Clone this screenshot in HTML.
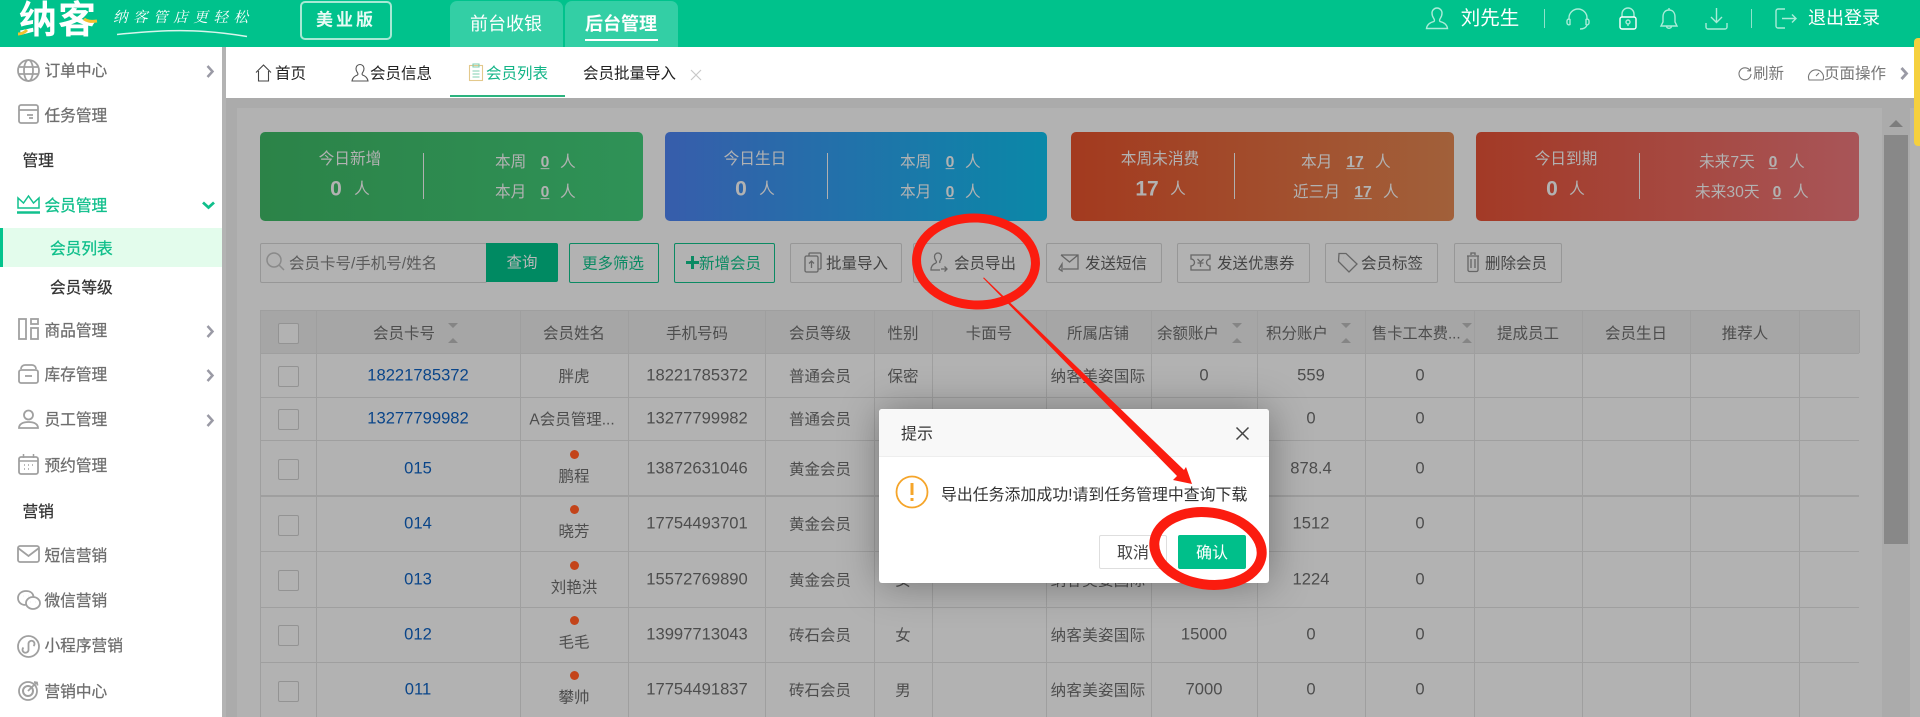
<!DOCTYPE html>
<html lang="zh-CN"><head><meta charset="utf-8"><title>会员列表</title>
<style>
html,body{margin:0;padding:0;width:1920px;height:717px;overflow:hidden;background:#fff}
body{position:relative;font-family:"Liberation Sans","Noto Sans CJK SC",sans-serif;font-size:15.5px;color:#555}
div,span,svg{position:absolute}
.c,.l{white-space:nowrap;line-height:1}
.c{transform:translate(-50%,-50%)}
.l{transform:translateY(-50%)}
svg{overflow:visible;fill:none}
.side{font-size:15.7px;color:#6e6e6e;-webkit-text-stroke:.25px #6e6e6e}
.side svg{stroke:#a0a0a0;stroke-width:1.8}
.hd svg{stroke:#a9ecd8;stroke-width:1.4}
.card{top:132px;height:89px;border-radius:5px}
.card .c,.card .l{color:#b2b2b2;font-size:15.7px}
.card .b{font-size:21px;font-weight:bold}
.card u{text-decoration:underline}
.dv{width:1px;top:21px;height:46px;background:#b0b0b0}
.btn{top:243px;height:38px;border:1px solid #979797;border-radius:2px;box-sizing:content-box}
.g{border-color:#0b8a63}
.tb svg{stroke:#666;stroke-width:1.3}
.vl{top:310px;width:1px;height:407px;background:#9f9f9f}
.hl{left:260px;width:1599px;height:1px;background:#9f9f9f}
.cb{left:278px;width:19px;height:19px;border:1px solid #939393;border-radius:2px;background:#b2b2b2}
.d{width:9px;height:9px;border-radius:50%;background:#c3441a;left:570px}
.a{color:#0a4589}
.tx{color:#4d4d4d}
.n{font-size:16.6px}
</style></head><body>

<!-- HEADER -->
<div class="hd" style="left:0;top:0;width:1920px;height:47px;background:#00c28c">
 <span class="c" style="left:58px;top:21px;font-size:38px;font-weight:bold;color:#fff;letter-spacing:1px">纳客</span>
 <svg style="left:0;top:0" width="110" height="47"><path d="M18 34c3 0 6-1 9-4" stroke="#f3c12f" stroke-width="3"/><path d="M84 19c3 2 6 3 13 2" stroke="#f3c12f" stroke-width="3"/></svg>
 <span class="l" style="left:113px;top:18px;font-family:'Liberation Serif','Noto Serif CJK SC',serif;font-size:14.5px;color:#fff;letter-spacing:5.6px;font-style:italic">纳客管店更轻松</span>
 <svg style="left:0;top:0" width="260" height="47"><path d="M117 34.500C140 32 175 29 205 31.500c15 1 30 3 42 5" stroke="#d8f5ec" stroke-width="1.500"/></svg>
 <div style="left:300px;top:1px;width:88px;height:35px;border:2px solid #a6e9d4;border-radius:5px"></div>
 <span class="c" style="left:346px;top:20px;font-size:17px;font-weight:bold;color:#e8fbf5;letter-spacing:3px">美业版</span>
 <div style="left:450px;top:1px;width:113px;height:46px;background:#33cfa5;border-radius:7px 7px 0 0"></div>
 <div style="left:565px;top:1px;width:113px;height:46px;background:#33cfa5;border-radius:7px 7px 0 0"></div>
 <span class="c" style="left:506px;top:24px;font-size:18px;color:#fff">前台收银</span>
 <span class="c" style="left:621px;top:24px;font-size:18px;font-weight:bold;color:#fff">后台管理</span>
 <div style="left:585px;top:39px;width:73px;height:2px;background:#fff"></div>

 <svg style="left:1426px;top:8px" width="22" height="22" viewBox="0 0 22 22"><path d="M8 13.500c-4 1-7 3-7.500 7h21c-.5-4-3.500-6-7.500-7-1-1-.5-2 .5-3.500 1-1.500 1.500-3 1.500-5a5 5 0 0 0-10 0c0 2 .5 3.500 1.500 5 1 1.500 1.500 2.500.5 3.500z"/></svg>
 <span class="c" style="left:1490px;top:19px;font-size:19.5px;color:#fff">刘先生</span>
 <div style="left:1544px;top:9px;width:1px;height:19px;background:#8fe3cb"></div>
 <svg style="left:1566px;top:8px" width="24" height="22" viewBox="0 0 24 22"><path d="M3 11V10a9 9 0 0 1 18 0v1M3 11a2 2 0 0 0-2 2v2a2 2 0 0 0 3 1.500V11.500A2 2 0 0 0 3 11zM21 11a2 2 0 0 1 2 2v2a2 2 0 0 1-3 1.500V11.500a2 2 0 0 1 1-.5zM21 17c-1 3-4 4-7 4"/></svg>
 <svg style="left:1619px;top:8px" width="18" height="22" viewBox="0 0 18 22"><path d="M3 9V6a6 6 0 0 1 12 0v3" /><rect x="1" y="9" width="16" height="12" rx="2" stroke="#fff"/><circle cx="9" cy="14" r="2"/><path d="M9 16v2"/></svg>
 <svg style="left:1660px;top:7px" width="18" height="24" viewBox="0 0 18 24"><path d="M9 3c-4 0-6 3-6 7v5l-2 4h16l-2-4v-5c0-4-2-7-6-7zM9 3V1M6.500 19c0 3 5 3 5 0"/></svg>
 <svg style="left:1705px;top:8px" width="23" height="22" viewBox="0 0 23 22"><path d="M11.500 0v14M6 9l5.500 5.500L17 9M1 15v4a2 2 0 0 0 2 2h17a2 2 0 0 0 2-2v-4"/></svg>
 <div style="left:1751px;top:9px;width:1px;height:19px;background:#8fe3cb"></div>
 <svg style="left:1775px;top:8px" width="22" height="21" viewBox="0 0 22 21"><path d="M10 1H3a2 2 0 0 0-2 2v15a2 2 0 0 0 2 2h7M7 10.500h14M17 6.500l4 4-4 4"/></svg>
 <span class="c" style="left:1844px;top:18px;font-size:18px;color:#fff">退出登录</span>
</div>

<!-- TABS -->
<div style="left:226px;top:47px;width:1694px;height:51px;background:#fff"></div>
<svg style="left:255px;top:64px;stroke:#444;stroke-width:1.100" width="17" height="18" viewBox="0 0 17 18"><path d="M1 8.500L8.500 1 16 8.500M3.500 7v10h10V7"/></svg>
<span class="l" style="left:275px;top:74px;color:#222">首页</span>
<svg style="left:351px;top:64px;stroke:#555;stroke-width:1.100" width="18" height="18" viewBox="0 0 18 18"><path d="M6.500 11c-3 1-5 3-5.500 6h16c-.5-3-2.500-5-5.500-6-1-1-.3-2 .5-3 .8-1.200 1-2.500 1-3.500a4 4 0 0 0-8 0c0 1 .2 2.300 1 3.500.8 1 1.500 2 .5 3z"/></svg>
<span class="l" style="left:370px;top:74px;color:#222">会员信息</span>
<svg style="left:468px;top:63px;stroke:#7fcfb2;stroke-width:1.100" width="16" height="18" viewBox="0 0 16 18"><rect x="1.500" y="2.500" width="13" height="15" stroke="#e3c98c"/><path d="M5 1h6v3H5zM4.500 8h7M4.500 11h7M4.500 14h7"/></svg>
<span class="l" style="left:486px;top:74px;color:#13b487">会员列表</span>
<div style="left:450px;top:95px;width:115px;height:2px;background:#2cb37f"></div>
<span class="l" style="left:583px;top:74px;color:#222">会员批量导入</span>
<svg style="left:690px;top:69px;stroke:#c9c9c9;stroke-width:1.200" width="12" height="12"><path d="M1 1l10 10M11 1L1 11"/></svg>
<svg style="left:1738px;top:67px;stroke:#777;stroke-width:1.100" width="14" height="14" viewBox="0 0 14 14"><path d="M12 3.500A6 6 0 1 0 13 7M12.500 .5v3.300H9.200"/></svg>
<span class="l" style="left:1753px;top:74px;color:#777">刷新</span>
<svg style="left:1808px;top:67px;stroke:#777;stroke-width:1.100" width="16" height="14" viewBox="0 0 16 14"><path d="M1 13a7.500 7.500 0 1 1 14 0zM8 9l3-3"/></svg>
<span class="l" style="left:1824px;top:74px;color:#777">页面操作</span>
<svg style="left:1900px;top:67px;stroke:#9a9aa5;stroke-width:2.800" width="9" height="13"><path d="M1.500 1l5 5.500-5 5.500"/></svg>

<!-- CONTENT BG -->
<div style="left:226px;top:98px;width:1694px;height:619px;background:#ababab"></div>
<div style="left:237px;top:108px;width:1683px;height:609px;background:#b2b2b2"></div>
<div style="left:1882px;top:108px;width:28px;height:609px;background:#ababab"></div>
<svg style="left:1889px;top:120px" width="14" height="7"><path d="M7 0l7 7H0z" fill="#7d7d7d"/></svg>
<div style="left:1884px;top:135px;width:24px;height:409px;background:#888"></div>

<!-- CARDS -->
<div class="card" style="left:260px;width:383px;background:linear-gradient(90deg,#2c8348,#2f9257)">
 <div class="dv" style="left:163px"></div>
 <span class="c" style="left:90px;top:28px">今日新增</span>
 <span class="c b" style="left:76px;top:57px">0</span><span class="c" style="left:102px;top:58px">人</span>
 <span class="l" style="left:235px;top:31px">本周</span><span class="c" style="left:285px;top:31px;font-weight:bold"><u>0</u></span><span class="l" style="left:300px;top:31px">人</span>
 <span class="l" style="left:235px;top:61px">本月</span><span class="c" style="left:285px;top:61px;font-weight:bold"><u>0</u></span><span class="l" style="left:300px;top:61px">人</span>
</div>
<div class="card" style="left:665px;width:382px;background:linear-gradient(90deg,#375dab,#0a88a8)">
 <div class="dv" style="left:162px"></div>
 <span class="c" style="left:90px;top:28px">今日生日</span>
 <span class="c b" style="left:76px;top:57px">0</span><span class="c" style="left:102px;top:58px">人</span>
 <span class="l" style="left:235px;top:31px">本周</span><span class="c" style="left:285px;top:31px;font-weight:bold"><u>0</u></span><span class="l" style="left:300px;top:31px">人</span>
 <span class="l" style="left:235px;top:61px">本月</span><span class="c" style="left:285px;top:61px;font-weight:bold"><u>0</u></span><span class="l" style="left:300px;top:61px">人</span>
</div>
<div class="card" style="left:1071px;width:383px;background:linear-gradient(90deg,#a33a1f,#a1603a)">
 <div class="dv" style="left:163px"></div>
 <span class="c" style="left:89px;top:28px">本周未消费</span>
 <span class="c b" style="left:76px;top:57px">17</span><span class="c" style="left:107px;top:58px">人</span>
 <span class="l" style="left:230px;top:31px">本月</span><span class="c" style="left:284px;top:31px;font-weight:bold"><u>17</u></span><span class="l" style="left:304px;top:31px">人</span>
 <span class="l" style="left:222px;top:61px">近三月</span><span class="c" style="left:292px;top:61px;font-weight:bold"><u>17</u></span><span class="l" style="left:312px;top:61px">人</span>
</div>
<div class="card" style="left:1476px;width:383px;background:linear-gradient(90deg,#a33a26,#a85558)">
 <div class="dv" style="left:163px"></div>
 <span class="c" style="left:90px;top:28px">今日到期</span>
 <span class="c b" style="left:76px;top:57px">0</span><span class="c" style="left:101px;top:58px">人</span>
 <span class="l" style="left:223px;top:31px">未来7天</span><span class="c" style="left:297px;top:31px;font-weight:bold"><u>0</u></span><span class="l" style="left:313px;top:31px">人</span>
 <span class="l" style="left:219px;top:61px">未来30天</span><span class="c" style="left:301px;top:61px;font-weight:bold"><u>0</u></span><span class="l" style="left:317px;top:61px">人</span>
</div>

<!-- TOOLBAR -->
<div class="tb">
<div class="btn" style="left:260px;width:225px"></div>
<svg style="left:266px;top:252px;stroke:#8a8a8a;stroke-width:1.500" width="19" height="20"><circle cx="8" cy="8" r="7"/><path d="M13 13l5 5"/></svg>
<span class="l" style="left:289px;top:264px;color:#5a5a5a">会员卡号/手机号/姓名</span>
<div style="left:486px;top:243px;width:72px;height:39px;background:#008a62;border-radius:0 2px 2px 0"></div>
<span class="c" style="left:522px;top:263px;color:#b8b8b8">查询</span>
<div class="btn g" style="left:569px;width:88px"></div><span class="c" style="left:613px;top:264px;color:#0b8a63">更多筛选</span>
<div class="btn g" style="left:674px;width:99px"></div>
<svg style="left:686px;top:256px;stroke:#0b8a63;stroke-width:3" width="13" height="13"><path d="M6.500 0v13M0 6.500h13"/></svg>
<span class="l" style="left:699px;top:264px;color:#0b8a63">新增会员</span>
<div class="btn" style="left:790px;width:110px"></div>
<svg style="left:804px;top:252px" width="18" height="21" viewBox="0 0 18 21"><rect x="1" y="4" width="13" height="16" rx="1.500"/><path d="M5 4V2a1 1 0 0 1 1-1h10a1 1 0 0 1 1 1v14a1 1 0 0 1-1 1h-2M7.500 16v-7M5 11.500l2.500-2.500 2.500 2.500"/></svg>
<span class="l" style="left:826px;top:264px;color:#444">批量导入</span>
<div class="btn" style="left:913px;width:117px"></div>
<svg style="left:930px;top:252px" width="18" height="20" viewBox="0 0 18 20"><path d="M6 11c-3 1-5 3-5 7h9M6 11c1-1 .3-2-.5-3-.7-1-1-2.200-1-3.500a3.500 3.500 0 0 1 7 0c0 1.300-.3 2.500-1 3.500-.8 1-1 2-.5 3M11 17h6M14.500 14.500L17 17l-2.500 2.500"/></svg>
<span class="l" style="left:954px;top:264px;color:#444">会员导出</span>
<div class="btn" style="left:1046px;width:114px"></div>
<svg style="left:1058px;top:254px" width="21" height="18" viewBox="0 0 21 18"><path d="M3 1h17v14H5M3 1l8.500 7L20 1M1 15l3-5v7z"/></svg>
<span class="l" style="left:1085px;top:264px;color:#444">发送短信</span>
<div class="btn" style="left:1177px;width:131px"></div>
<svg style="left:1190px;top:254px" width="21" height="17" viewBox="0 0 21 17"><path d="M1 1h19v4a3 3 0 0 0 0 7v4H1v-4a3 3 0 0 0 0-7zM7.500 5l3 3 3-3M7.500 9h6M10.500 8v5"/></svg>
<span class="l" style="left:1217px;top:264px;color:#444">发送优惠券</span>
<div class="btn" style="left:1325px;width:111px"></div>
<svg style="left:1337px;top:252px" width="21" height="21" viewBox="0 0 21 21"><path d="M2 1.500h7L20 12l-8 8L1.500 9.500zM6 6h.1"/></svg>
<span class="l" style="left:1361px;top:264px;color:#444">会员标签</span>
<div class="btn" style="left:1454px;width:106px"></div>
<svg style="left:1466px;top:252px" width="14" height="20" viewBox="0 0 14 20"><path d="M1 4h12M5 3V1h4v2M2 4v14a1.500 1.500 0 0 0 1.500 1.500h7A1.500 1.500 0 0 0 12 18V4M5 7v9M9 7v9"/></svg>
<span class="l" style="left:1485px;top:264px;color:#444">删除会员</span>
</div>

<!-- TABLE -->
<div style="left:260px;top:310px;width:1599px;height:43px;background:#a6a6a6"></div>
<div class="hl" style="top:310px"></div><div class="hl" style="top:353px"></div><div class="hl" style="top:397px"></div><div class="hl" style="top:440px"></div><div class="hl" style="top:495px;height:2px"></div><div class="hl" style="top:551px"></div><div class="hl" style="top:607px"></div><div class="hl" style="top:662px"></div>
<div class="vl" style="left:260px"></div><div class="vl" style="left:316px"></div><div class="vl" style="left:520px"></div><div class="vl" style="left:628px"></div><div class="vl" style="left:765px"></div><div class="vl" style="left:874px"></div><div class="vl" style="left:932px"></div><div class="vl" style="left:1046px"></div><div class="vl" style="left:1151px"></div><div class="vl" style="left:1257px"></div><div class="vl" style="left:1365px"></div><div class="vl" style="left:1474px"></div><div class="vl" style="left:1582px"></div><div class="vl" style="left:1690px"></div><div class="vl" style="left:1799px"></div>
<div class="vl" style="left:1859px;height:43px"></div>

<div class="tx">
<div class="cb" style="top:323px"></div>
<span class="c" style="left:404px;top:334px">会员卡号</span><span class="c" style="left:574px;top:334px">会员姓名</span><span class="c" style="left:697px;top:334px">手机号码</span><span class="c" style="left:820px;top:334px">会员等级</span><span class="c" style="left:903px;top:334px">性别</span><span class="c" style="left:989px;top:334px">卡面号</span><span class="c" style="left:1098px;top:334px">所属店铺</span><span class="c" style="left:1188px;top:334px">余额账户</span><span class="c" style="left:1297px;top:334px">积分账户</span><span class="l" style="left:1372px;top:334px;font-size:15.2px">售卡工本费...</span><span class="c" style="left:1528px;top:334px">提成员工</span><span class="c" style="left:1636px;top:334px">会员生日</span><span class="c" style="left:1745px;top:334px">推荐人</span>
<svg style="left:448px;top:323px" width="10" height="20"><path d="M0 0h10L5 5zM5 15l5 5H0z" fill="#858585"/></svg>
<svg style="left:1232px;top:323px" width="10" height="20"><path d="M0 0h10L5 5zM5 15l5 5H0z" fill="#858585"/></svg>
<svg style="left:1341px;top:323px" width="10" height="20"><path d="M0 0h10L5 5zM5 15l5 5H0z" fill="#858585"/></svg>
<svg style="left:1462px;top:323px" width="10" height="20"><path d="M0 0h10L5 5zM5 15l5 5H0z" fill="#858585"/></svg>

<div class="cb" style="top:366px"></div>
<span class="c a n" style="left:418px;top:376px">18221785372</span><span class="c" style="left:574px;top:377px">胖虎</span><span class="c n" style="left:697px;top:376px">18221785372</span><span class="c" style="left:820px;top:377px">普通会员</span><span class="c" style="left:903px;top:377px">保密</span><span class="c" style="left:1098px;top:377px;letter-spacing:.3px">纳客美姿国际</span><span class="c n" style="left:1204px;top:376px">0</span><span class="c n" style="left:1311px;top:376px">559</span><span class="c n" style="left:1420px;top:376px">0</span>

<div class="cb" style="top:409px"></div>
<span class="c a n" style="left:418px;top:419px">13277799982</span><span class="c" style="left:572px;top:420px">A会员管理...</span><span class="c n" style="left:697px;top:419px">13277799982</span><span class="c" style="left:820px;top:420px">普通会员</span><span class="c n" style="left:1311px;top:419px">0</span><span class="c n" style="left:1420px;top:419px">0</span>

<div class="cb" style="top:459px"></div>
<span class="c a n" style="left:418px;top:469px">015</span><div class="d" style="top:450px"></div><span class="c" style="left:574px;top:477px">鹏程</span><span class="c n" style="left:697px;top:469px">13872631046</span><span class="c" style="left:820px;top:470px">黄金会员</span><span class="c n" style="left:1311px;top:469px">878.4</span><span class="c n" style="left:1420px;top:469px">0</span>

<div class="cb" style="top:515px"></div>
<span class="c a n" style="left:418px;top:524px">014</span><div class="d" style="top:505px"></div><span class="c" style="left:574px;top:532px">晓芳</span><span class="c n" style="left:697px;top:524px">17754493701</span><span class="c" style="left:820px;top:525px">黄金会员</span><span class="c n" style="left:1311px;top:524px">1512</span><span class="c n" style="left:1420px;top:524px">0</span>

<div class="cb" style="top:570px"></div>
<span class="c a n" style="left:418px;top:580px">013</span><div class="d" style="top:561px"></div><span class="c" style="left:574px;top:588px">刘艳洪</span><span class="c n" style="left:697px;top:580px">15572769890</span><span class="c" style="left:820px;top:581px">黄金会员</span><span class="c" style="left:903px;top:581px">女</span><span class="c" style="left:1098px;top:581px;letter-spacing:.3px">纳客美姿国际</span><span class="c n" style="left:1311px;top:580px">1224</span><span class="c n" style="left:1420px;top:580px">0</span>

<div class="cb" style="top:625px"></div>
<span class="c a n" style="left:418px;top:635px">012</span><div class="d" style="top:616px"></div><span class="c" style="left:574px;top:643px">毛毛</span><span class="c n" style="left:697px;top:635px">13997713043</span><span class="c" style="left:820px;top:636px">砖石会员</span><span class="c" style="left:903px;top:636px">女</span><span class="c" style="left:1098px;top:636px;letter-spacing:.3px">纳客美姿国际</span><span class="c n" style="left:1204px;top:635px">15000</span><span class="c n" style="left:1311px;top:635px">0</span><span class="c n" style="left:1420px;top:635px">0</span>

<div class="cb" style="top:681px"></div>
<span class="c a n" style="left:418px;top:690px">011</span><div class="d" style="top:671px"></div><span class="c" style="left:574px;top:698px">攀帅</span><span class="c n" style="left:697px;top:690px">17754491837</span><span class="c" style="left:820px;top:691px">砖石会员</span><span class="c" style="left:903px;top:691px">男</span><span class="c" style="left:1098px;top:691px;letter-spacing:.3px">纳客美姿国际</span><span class="c n" style="left:1204px;top:690px">7000</span><span class="c n" style="left:1311px;top:690px">0</span><span class="c n" style="left:1420px;top:690px">0</span>
</div>

<!-- SIDEBAR -->
<div style="left:0;top:47px;width:222px;height:670px;background:#fff"></div>
<div style="left:222px;top:47px;width:4px;height:670px;background:#b3b3b3"></div>
<div class="side" style="left:0;top:0;width:222px;height:717px">
 <svg style="left:17px;top:59px" width="23" height="23" viewBox="0 0 23 23"><circle cx="11.500" cy="11.500" r="10.500"/><ellipse cx="11.500" cy="11.500" rx="4.500" ry="10.500"/><path d="M1 8h21M1 15h21"/></svg>
 <span class="l" style="left:44.500px;top:71.500px">订单中心</span>
 <svg style="left:206px;top:65px;stroke:#9a9aa5;stroke-width:2.500" width="9" height="13"><path d="M1.500 1l5 5.500-5 5.500"/></svg>
 <svg style="left:18px;top:104px" width="21" height="20" viewBox="0 0 21 20"><rect x="1" y="1" width="19" height="18" rx="2"/><path d="M1 6h19M9 11h6M11 14h4"/></svg>
 <span class="l" style="left:44.500px;top:116.500px">任务管理</span>
 <span class="l" style="left:22.500px;top:161.500px;color:#333;-webkit-text-stroke:.25px #333">管理</span>
 <svg style="left:17px;top:195px;stroke:#11c18e" width="23" height="19" viewBox="0 0 23 19"><path d="M1 13V3l5.500 5L11.500 1l5 7L22 3v10z" stroke-width="1.500"/><path d="M0 17.500h23" stroke-width="2.500"/></svg>
 <span class="l" style="left:44.500px;top:207px;color:#10bf8b;-webkit-text-stroke:.3px #10bf8b">会员管理</span>
 <svg style="left:202px;top:201px;stroke:#10bf8b;stroke-width:2.800" width="13" height="9"><path d="M1 1.500l5.500 5 5.500-5"/></svg>
 <div style="left:0;top:228px;width:222px;height:39px;background:#e3fcec"></div>
 <div style="left:0;top:228px;width:3px;height:39px;background:#03c48d"></div>
 <span class="l" style="left:50px;top:249.500px;color:#10bf8b;-webkit-text-stroke:.3px #10bf8b">会员列表</span>
 <span class="l" style="left:50px;top:289px;color:#333;-webkit-text-stroke:.25px #333">会员等级</span>
 <svg style="left:18px;top:318px" width="21" height="22" viewBox="0 0 21 22"><rect x="1" y="1" width="7" height="20"/><rect x="13" y="1" width="7" height="5"/><rect x="13" y="10" width="7" height="11"/></svg>
 <span class="l" style="left:44.500px;top:332px">商品管理</span>
 <svg style="left:206px;top:325px;stroke:#9a9aa5;stroke-width:2.500" width="9" height="13"><path d="M1.500 1l5 5.500-5 5.500"/></svg>
 <svg style="left:18px;top:364px" width="21" height="20" viewBox="0 0 21 20"><path d="M3 5a4 4 0 0 1 4-4h7a4 4 0 0 1 4 4"/><rect x="1" y="6" width="19" height="13" rx="2"/><path d="M7 12h7"/></svg>
 <span class="l" style="left:44.500px;top:376px">库存管理</span>
 <svg style="left:206px;top:369px;stroke:#9a9aa5;stroke-width:2.500" width="9" height="13"><path d="M1.500 1l5 5.500-5 5.500"/></svg>
 <svg style="left:18px;top:409px" width="21" height="20" viewBox="0 0 21 20"><circle cx="10.500" cy="6" r="4.500"/><path d="M1 19c0-4 4-6 9.500-6s9.500 2 9.500 6z"/></svg>
 <span class="l" style="left:44.500px;top:421px">员工管理</span>
 <svg style="left:206px;top:414px;stroke:#9a9aa5;stroke-width:2.500" width="9" height="13"><path d="M1.500 1l5 5.500-5 5.500"/></svg>
 <svg style="left:18px;top:454px" width="21" height="21" viewBox="0 0 21 21"><rect x="1" y="3" width="19" height="17" rx="2"/><path d="M1 7h19M5.500 0v4M15.500 0v4M6 11h1M10 11h1M14 11h1M6 15h1M10 15h1" stroke-width="1.500"/></svg>
 <span class="l" style="left:44.500px;top:466.500px">预约管理</span>
 <span class="l" style="left:22.500px;top:512.500px;color:#333;-webkit-text-stroke:.25px #333">营销</span>
 <svg style="left:17px;top:545px" width="23" height="18" viewBox="0 0 23 18"><rect x="1" y="1" width="21" height="16" rx="2"/><path d="M1 3l10.500 8L22 3"/></svg>
 <span class="l" style="left:44.500px;top:557px">短信营销</span>
 <svg style="left:17px;top:590px" width="24" height="20" viewBox="0 0 24 20"><path d="M8.500 15C4 15 1 12 1 8s3.500-7 8-7c4 0 7 2 7.500 5.500"/><ellipse cx="16" cy="13" rx="7" ry="6"/><path d="M6 6h.1M11 6h.1M13.500 12h.1M18.500 12h.1" stroke-width="2"/></svg>
 <span class="l" style="left:44.500px;top:602px">微信营销</span>
 <svg style="left:17px;top:635px" width="23" height="23" viewBox="0 0 23 23"><circle cx="11.500" cy="11.500" r="10.500"/><path d="M6.500 12.500a3 3 0 1 0 5 2.500V8.500a3 3 0 1 1 5 2.500"/></svg>
 <span class="l" style="left:44.500px;top:647px">小程序营销</span>
 <svg style="left:18px;top:680px" width="21" height="21" viewBox="0 0 21 21"><circle cx="10" cy="11" r="9"/><circle cx="10" cy="11" r="5" stroke-width="2"/><path d="M10 11l9-9M16 2l3 .5.500 3"/></svg>
 <span class="l" style="left:44.500px;top:692.500px">营销中心</span>
</div>

<!-- YELLOW TAB -->
<div style="left:1914px;top:38px;width:6px;height:108px;background:#f5d03e;border-radius:4px 0 0 4px"></div>

<!-- MODAL -->
<div style="left:879px;top:409px;width:390px;height:174px;background:#fff;border-radius:3px;box-shadow:1px 1px 40px rgba(0,0,0,.35)"></div>
<div style="left:879px;top:409px;width:390px;height:47px;background:#f8f8f8;border-bottom:1px solid #eee;border-radius:3px 3px 0 0"></div>
<span class="l" style="left:901px;top:435px;font-size:16px;color:#333">提示</span>
<svg style="left:1236px;top:427px;stroke:#444;stroke-width:1.500" width="13" height="13"><path d="M.5.500l12 12M12.500.500l-12 12"/></svg>
<svg style="left:895px;top:475px" width="34" height="34" viewBox="0 0 34 34"><circle cx="17" cy="17" r="15.500" stroke="#f5a52a" stroke-width="1.800"/><path d="M17 8v12" stroke="#f5a52a" stroke-width="3"/><path d="M17 23v3" stroke="#f5a52a" stroke-width="3"/></svg>
<span class="l" style="left:941px;top:496px;font-size:15.9px;color:#333">导出任务添加成功!请到任务管理中查询下载</span>
<div style="left:1099px;top:535px;width:66px;height:32px;border:1px solid #dedede;border-radius:2px;background:#fff"></div>
<span class="c" style="left:1133px;top:553.500px;font-size:16px;color:#444">取消</span>
<div style="left:1178px;top:535px;width:68px;height:34px;background:#00bf8a;border-radius:2px"></div>
<span class="c" style="left:1212px;top:553.500px;font-size:16px;color:#fff">确认</span>

<!-- RED MARKS -->
<svg style="left:0;top:0" width="1920" height="717" viewBox="0 0 1920 717">
 <ellipse cx="976" cy="261.500" rx="59.500" ry="43.500" stroke="#fb1c0f" stroke-width="9" transform="rotate(3 976 261.500)"/>
 <ellipse cx="1208" cy="548.500" rx="54" ry="36" stroke="#fb1c0f" stroke-width="10" transform="rotate(8 1208 548.500)"/>
 <path d="M983 278L984 277.500 1184 470 1186 467 1192 484 1173 480 1177 476z" fill="#fb1c0f"/>
</svg>
</body></html>
